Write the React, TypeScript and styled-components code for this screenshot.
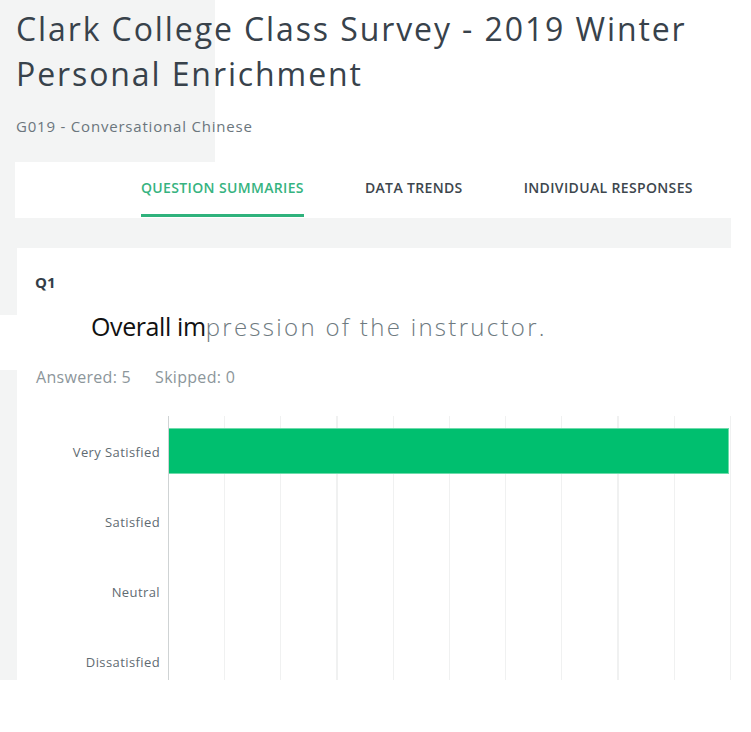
import React from 'react'
import styled, { createGlobalStyle } from 'styled-components'

const GlobalStyle = createGlobalStyle`
  html, body {
    margin: 0;
    padding: 0;
    background: #ffffff;
  }
  body {
    font-family: 'Open Sans', 'Liberation Sans', Arial, sans-serif;
    color: #333e48;
  }
`

const GREY = '#f3f4f4'

interface Answer {
  label: string
  value: number
}

const answers: Answer[] = [
  { label: 'Very Satisfied', value: 100 },
  { label: 'Satisfied', value: 0 },
  { label: 'Neutral', value: 0 },
  { label: 'Dissatisfied', value: 0 },
]

const tabs = ['QUESTION SUMMARIES', 'DATA TRENDS', 'INDIVIDUAL RESPONSES']

const App: React.FC = () => {
  return (
    <Page>
      <GlobalStyle />
      <Header>
        <Title>
          Clark College Class Survey - 2019 Winter
          <br />
          Personal Enrichment
        </Title>
        <Subtitle>G019 - Conversational Chinese</Subtitle>
      </Header>

      <Main>
        <TabBar>
          {tabs.map((t, i) => (
            <Tab key={t} $active={i === 0}>
              {t}
            </Tab>
          ))}
        </TabBar>

        <CardRow>
          <Gutter />
          <Card>
            <QNumber>Q1</QNumber>
            <Question>
              <Pasted>Overall im</Pasted>pression of the instructor.
            </Question>
            <Stats>
              <span>Answered: 5</span>
              <span>Skipped: 0</span>
            </Stats>
            <Chart>
              <Labels>
                {answers.map((a) => (
                  <Label key={a.label}>{a.label}</Label>
                ))}
              </Labels>
              <Plot>
                {answers.map((a) => (
                  <BarRow key={a.label}>
                    {a.value > 0 && <Bar style={{ width: `${a.value}%` }} />}
                  </BarRow>
                ))}
              </Plot>
            </Chart>
          </Card>
        </CardRow>
      </Main>
    </Page>
  )
}

export default App

const Page = styled.div`
  width: 751px;
  height: 732px;
  overflow: hidden;
  background: #ffffff;
`

const Header = styled.header`
  height: 162px;
  box-sizing: border-box;
  padding: 6px 16px 0;
  background: linear-gradient(90deg, ${GREY} 215px, #ffffff 215px);
`

const Title = styled.h1`
  margin: 0;
  font-size: 32px;
  line-height: 45px;
  font-weight: 400;
  letter-spacing: 1.9px;
  color: #38424b;
  white-space: nowrap;
`

const Subtitle = styled.div`
  margin-top: 20px;
  font-size: 15px;
  line-height: 20px;
  letter-spacing: 0.8px;
  color: #6b767d;
`

const Main = styled.main`
  width: 731px;
  background: ${GREY};
  display: flex;
  flex-direction: column;
  gap: 30px;
`

const TabBar = styled.nav`
  margin-left: 15px;
  height: 56px;
  background: #ffffff;
  display: flex;
  align-items: stretch;
  gap: 61px;
  padding-left: 126px;
`

const Tab = styled.div<{ $active?: boolean }>`
  padding-top: 16px;
  box-sizing: border-box;
  font-size: 14px;
  line-height: 20px;
  font-weight: 600;
  letter-spacing: 0.35px;
  color: ${({ $active }) => ($active ? '#36b380' : '#3d464d')};
  border-bottom: 3px solid ${({ $active }) => ($active ? '#2fb27c' : 'transparent')};
  margin-bottom: 1px;
`

const CardRow = styled.div`
  display: flex;
  height: 432px;
`

const Gutter = styled.div`
  width: 17px;
  flex: none;
  background: linear-gradient(
    180deg,
    ${GREY} 67px,
    #ffffff 67px,
    #ffffff 122px,
    ${GREY} 122px
  );
`

const Card = styled.section`
  flex: 1;
  background: #ffffff;
  overflow: hidden;
  display: flex;
  flex-direction: column;
`

const QNumber = styled.div`
  margin: 24px 0 0 18px;
  font-size: 15px;
  line-height: 20px;
  font-weight: 700;
  color: #333e48;
`

const Question = styled.div`
  margin: 17px 0 0 74px;
  font-size: 24px;
  line-height: 34px;
  font-weight: 300;
  letter-spacing: 2.3px;
  color: #6e7a80;
  white-space: nowrap;
`

const Pasted = styled.span`
  color: #111111;
  font-size: 25px;
  font-weight: 400;
  letter-spacing: -0.4px;
`

const Stats = styled.div`
  margin: 23px 0 0 19px;
  display: flex;
  gap: 24px;
  font-size: 16px;
  line-height: 20px;
  letter-spacing: 0.3px;
  color: #8c969b;
`

const Chart = styled.div`
  margin-top: 29px;
  display: grid;
  grid-template-columns: 151px 1fr;
  height: 265px;
`

const Labels = styled.div`
  display: flex;
  flex-direction: column;
  padding-right: 8px;
`

const Label = styled.div`
  height: 70px;
  flex: none;
  display: flex;
  align-items: center;
  justify-content: flex-end;
  padding-top: 2px;
  box-sizing: border-box;
  font-size: 13px;
  letter-spacing: 0.4px;
  color: #5f6b72;
`

const Plot = styled.div`
  border-left: 1px solid #cfd3d4;
  background-image: repeating-linear-gradient(
    90deg,
    transparent 0,
    transparent 55px,
    #f0f1f1 55px,
    #f0f1f1 56.2px
  );
  display: flex;
  flex-direction: column;
  padding-right: 2px;
`

const BarRow = styled.div`
  height: 70px;
  flex: none;
  display: flex;
  align-items: center;
`

const Bar = styled.div`
  height: 46px;
  box-sizing: border-box;
  background: #00bf6f;
  border: 1px solid #6edbab;
  border-left: none;
`
